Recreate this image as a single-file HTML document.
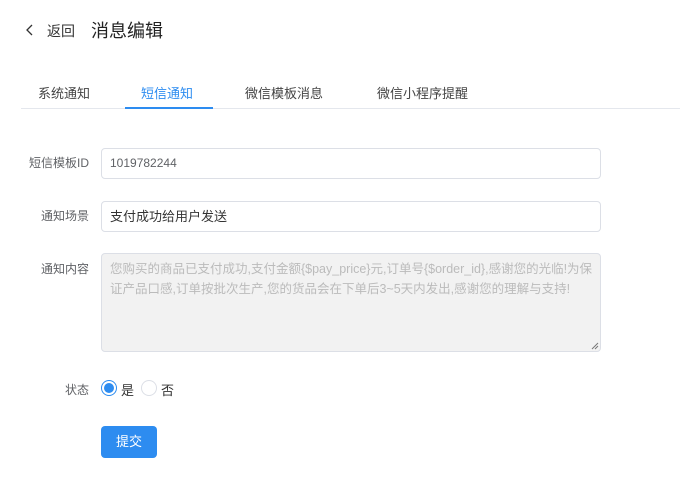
<!DOCTYPE html>
<html><head><meta charset="utf-8"><style>
*{margin:0;padding:0;box-sizing:border-box}
body{width:680px;height:488px;background:#fff;font-family:"Liberation Sans","Noto Sans CJK SC",sans-serif;color:#333;position:relative;overflow:hidden}
.a{position:absolute;white-space:nowrap}
.lbl{font-size:12px;color:#606266;text-align:right;width:68px;left:21px}
.inp{position:absolute;left:101px;width:500px;border:1px solid #dcdfe6;border-radius:4px;font-size:13px;padding-left:8px;color:#606266}
</style></head><body>
<svg class="a" style="left:25px;top:24px" width="10" height="12"><path d="M7 1 L2 6 L7 11" fill="none" stroke="#333" stroke-width="1.3"/></svg>
<div class="a" style="left:47px;top:21px;font-size:14px;color:#333">返回</div>
<div class="a" style="left:91px;top:17px;font-size:18px;color:#222">消息编辑</div>
<div class="a" style="left:21px;top:108px;width:659px;height:1px;background:#e4e7ed"></div>
<div class="a" style="left:125px;top:107px;width:88px;height:2px;background:#2d8cf0"></div>
<div class="a" style="left:38px;top:83px;font-size:13px;color:#444">系统通知</div>
<div class="a" style="left:141px;top:83px;font-size:13px;color:#2d8cf0">短信通知</div>
<div class="a" style="left:245px;top:83px;font-size:13px;color:#444">微信模板消息</div>
<div class="a" style="left:377px;top:83px;font-size:13px;color:#444">微信小程序提醒</div>
<div class="a lbl" style="top:154px">短信模板ID</div>
<div class="inp" style="top:148px;height:31px;line-height:29px;font-size:12px">1019782244</div>
<div class="a lbl" style="top:207px">通知场景</div>
<div class="inp" style="top:201px;height:31px;line-height:29px;color:#333">支付成功给用户发送</div>
<div class="a lbl" style="top:260px">通知内容</div>
<div class="inp" style="top:253px;height:99px;background:#f2f2f2;color:#bbb;font-size:12.5px;line-height:20px;padding-top:5px;white-space:normal">您购买的商品已支付成功,支付金额{$pay_price}元,订单号{$order_id},感谢您的光临!为保证产品口感,订单按批次生产,您的货品会在下单后3~5天内发出,感谢您的理解与支持!</div>
<svg class="a" style="left:591px;top:342px" width="8" height="8"><path d="M1 7L7 1M4 7L7 4" stroke="#777" stroke-width="1"/></svg>
<div class="a lbl" style="top:381px">状态</div>
<div class="a" style="left:101px;top:380px;width:16px;height:16px;border:1px solid #2d8cf0;border-radius:50%"><div style="margin:2px;width:10px;height:10px;border-radius:50%;background:#2d8cf0"></div></div>
<div class="a" style="left:121px;top:380px;font-size:13px">是</div>
<div class="a" style="left:141px;top:380px;width:16px;height:16px;border:1px solid #dcdfe6;border-radius:50%"></div>
<div class="a" style="left:161px;top:380px;font-size:13px">否</div>
<div class="a" style="left:101px;top:426px;width:56px;height:32px;background:#2d8cf0;border-radius:4px;color:#fff;font-size:13px;text-align:center;line-height:32px">提交</div>
</body></html>
